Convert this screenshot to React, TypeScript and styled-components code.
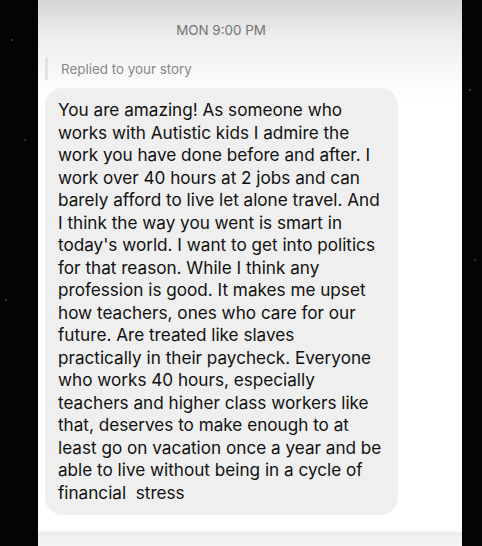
import React from "react";
import styled, { createGlobalStyle } from "styled-components";

const Global = createGlobalStyle`
  html, body { margin: 0; padding: 0; background: #040404; }
  body { font-family: Inter, "Liberation Sans", Arial, sans-serif; }
`;

const Screen = styled.div`
  display: flex;
  width: 482px;
  height: 546px;
  overflow: hidden;
  background-color: #040404;
  background-image:
    radial-gradient(circle at 12px 40px, rgba(255,255,255,0.25) 0.6px, transparent 1.2px),
    radial-gradient(circle at 25px 140px, rgba(255,255,255,0.2) 0.6px, transparent 1.2px),
    radial-gradient(circle at 6px 300px, rgba(255,255,255,0.2) 0.6px, transparent 1.2px),
    radial-gradient(circle at 470px 90px, rgba(255,255,255,0.25) 0.6px, transparent 1.2px),
    radial-gradient(circle at 475px 260px, rgba(255,255,255,0.2) 0.6px, transparent 1.2px);
`;

const Strip = styled.div<{ $w: number }>`
  flex: 0 0 ${(p) => p.$w}px;
`;

const Panel = styled.div`
  flex: 0 0 424px;
  display: flex;
  flex-direction: column;
  padding: 20px 0 0 7px;
  box-sizing: border-box;
  background: linear-gradient(
    to bottom,
    #d6d6d6 0px,
    #ececec 35px,
    #f8f8f8 70px,
    #ffffff 100px,
    #ffffff 530px,
    #e9e9e9 534px,
    #f2f2f2 536px,
    #f4f4f4 546px
  );
`;

const TimeStamp = styled.div`
  font-size: 13.4px;
  line-height: 20px;
  color: #747474;
  text-align: center;
  padding-right: 65px;
`;

const ReplyRow = styled.div`
  display: flex;
  align-items: center;
  gap: 13px;
  margin-top: 17px;
  height: 23px;
`;

const ReplyBar = styled.div`
  width: 3px;
  height: 23px;
  border-radius: 2px;
  background: #e2e2e2;
`;

const ReplyText = styled.div`
  font-size: 13.4px;
  line-height: 20px;
  color: #878787;
`;

const Bubble = styled.div`
  margin-top: 8px;
  width: 353px;
  box-sizing: border-box;
  padding: 11px 10px 11px 13px;
  border-radius: 18px;
  background: #efefef;
  color: #111111;
  font-size: 17.15px;
  line-height: 22.5px;
`;

const Line = styled.div`
  white-space: pre;
`;

const lines = [
  "You are amazing! As someone who",
  "works with Autistic kids I admire the",
  "work you have done before and after. I",
  "work over 40 hours at 2 jobs and can",
  "barely afford to live let alone travel. And",
  "I think the way you went is smart in",
  "today's world. I want to get into politics",
  "for that reason. While I think any",
  "profession is good. It makes me upset",
  "how teachers, ones who care for our",
  "future. Are treated like slaves",
  "practically in their paycheck. Everyone",
  "who works 40 hours, especially",
  "teachers and higher class workers like",
  "that, deserves to make enough to at",
  "least go on vacation once a year and be",
  "able to live without being in a cycle of",
  "financial  stress",
];

export default function App() {
  return (
    <>
      <Global />
      <Screen>
        <Strip $w={38} />
        <Panel>
          <TimeStamp>MON 9:00 PM</TimeStamp>
          <ReplyRow>
            <ReplyBar />
            <ReplyText>Replied to your story</ReplyText>
          </ReplyRow>
          <Bubble>
            {lines.map((l, i) => (
              <Line key={i}>{l}</Line>
            ))}
          </Bubble>
        </Panel>
        <Strip $w={20} />
      </Screen>
    </>
  );
}
